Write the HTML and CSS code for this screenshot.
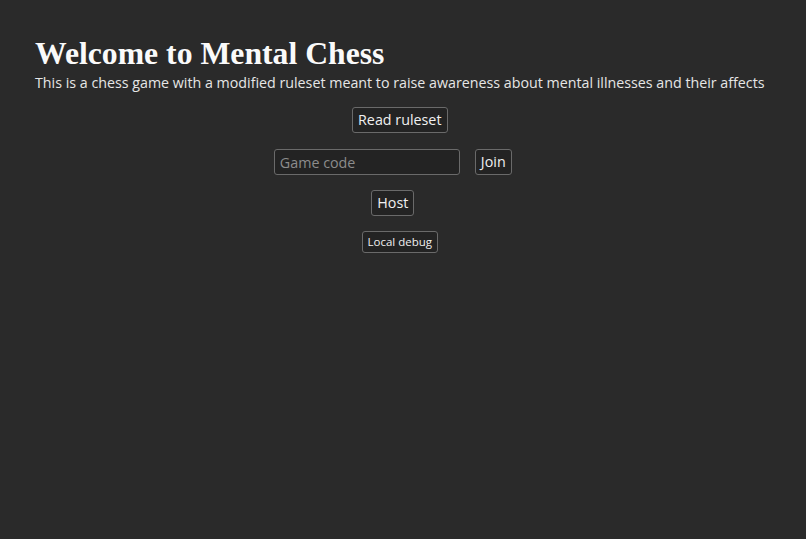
FILE: index.html
```html
<!DOCTYPE html>
<html>
<head>
<meta charset="utf-8">
<link rel="stylesheet" href="styles.css">
</head>
<body>
<main class="page">
  <h1 class="title">Welcome to Mental Chess</h1>
  <p class="lead">This is a chess game with a modified ruleset meant to raise awareness about mental illnesses and their affects</p>
  <div class="actions">
    <button class="btn">Read ruleset</button>
    <div class="join-row">
      <input class="code" type="text" placeholder="Game code">
      <button class="btn">Join</button>
    </div>
    <button class="btn shifted">Host</button>
    <button class="btn small">Local debug</button>
  </div>
</main>
</body>
</html>
```

FILE: styles.css
```css
html, body {
  margin: 0;
  padding: 0;
  background: #2a2a2a;
  height: 100%;
}
body {
  font-family: "Open Sans", sans-serif;
  color: #e8e8e8;
}
.page {
  width: fit-content;
  padding: 36px 0 0 35px;
}
.title {
  font-family: "Liberation Serif", serif;
  font-weight: bold;
  font-size: 31.7px;
  line-height: 36px;
  margin: 0;
  color: #fafafa;
}
.lead {
  font-size: 14.25px;
  line-height: 22px;
  margin: 0;
  color: #e6e6e6;
}
.actions {
  display: flex;
  flex-direction: column;
  align-items: center;
  gap: 15px;
  margin-top: 13px;
}
.actions > .join-row {
  margin-top: 1px;
}
.btn {
  font-family: "Open Sans", sans-serif;
  font-size: 14.3px;
  color: #f0f0f0;
  background: #232323;
  border: 1px solid #6a6a6a;
  border-radius: 3px;
  padding: 2px 5px;
  height: 26px;
  line-height: 20px;
}
.join-row {
  display: flex;
  gap: 15px;
  margin-right: 14px;
}
.code {
  font-family: "Open Sans", sans-serif;
  font-size: 14.3px;
  width: 186px;
  height: 26px;
  box-sizing: border-box;
  background: #232323;
  border: 1px solid #6a6a6a;
  border-radius: 3px;
  color: #eee;
  padding: 0 5px;
}
.code::placeholder {
  color: #8c8c8c;
}
.shifted {
  margin-right: 14px;
}
.small {
  font-size: 11.5px;
  height: 22px;
  line-height: 18px;
  padding: 1px 5px;
}
```
